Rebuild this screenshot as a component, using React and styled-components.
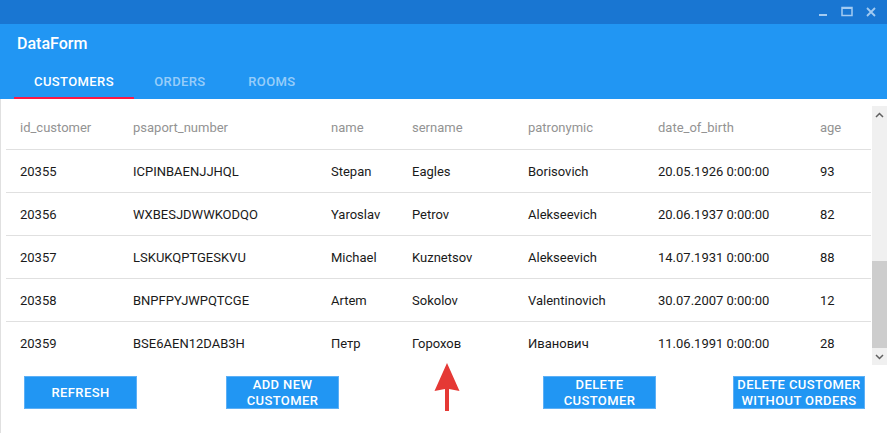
import React from "react";
import styled, { createGlobalStyle } from "styled-components";

const GlobalStyle = createGlobalStyle`
  html, body {
    margin: 0;
    padding: 0;
    background: #ffffff;
  }
  body {
    font-family: Roboto, "Liberation Sans", sans-serif;
  }
`;

const Window = styled.div`
  width: 887px;
  height: 433px;
  display: flex;
  flex-direction: column;
  overflow: hidden;
  background: #fff;
`;

const TitleBar = styled.div`
  height: 24px;
  background: #1976d2;
  display: flex;
  justify-content: flex-end;
  align-items: center;
  padding-right: 10px;
  gap: 12px;
`;

const WinIcon = styled.svg`
  width: 12px;
  height: 12px;
  display: block;
`;

const Header = styled.div`
  background: #2196f3;
  display: flex;
  flex-direction: column;
`;

const AppTitle = styled.div`
  height: 38px;
  padding-left: 17px;
  display: flex;
  align-items: center;
  color: #fff;
  font-size: 16px;
  font-weight: 500;
`;

const Tabs = styled.div`
  height: 37px;
  padding-left: 14px;
  display: flex;
`;

const Tab = styled.div`
  min-width: 92px;
  padding: 3px 20px 0;
  box-sizing: border-box;
  display: flex;
  align-items: center;
  justify-content: center;
  font-size: 13px;
  font-weight: 500;
  letter-spacing: 0.4px;
  color: ${(p) => (p.$active ? "#ffffff" : "rgba(255,255,255,0.55)")};
  border-bottom: 2px solid ${(p) => (p.$active ? "#ff1744" : "transparent")};
`;

const Content = styled.div`
  flex: 1;
  position: relative;
  border-left: 1px solid #e0e0e0;
  display: flex;
  flex-direction: column;
`;

const GridArea = styled.div`
  margin-top: 7px;
  height: 259px;
  display: flex;
  overflow: hidden;
`;

const Table = styled.div`
  width: 865px;
  margin-left: 5px;
  margin-right: 1px;
`;

const cols = "113px 198px 81px 116px 130px 162px 65px";

const HeadRow = styled.div`
  display: grid;
  grid-template-columns: ${cols};
  height: 43px;
  align-items: center;
  color: #939393;
  font-size: 13px;
`;

const Row = styled.div`
  display: grid;
  grid-template-columns: ${cols};
  height: 43px;
  box-sizing: border-box;
  border-top: 1px solid #e0e0e0;
  align-items: center;
  color: #1a1a1a;
  font-size: 13px;
  font-weight: 400;
`;

const Cell = styled.div`
  padding-left: 14px;
  white-space: nowrap;
`;

const ScrollBar = styled.div`
  width: 15px;
  background: #f0f0f0;
  display: flex;
  flex-direction: column;
`;

const ScrollBtn = styled.div`
  height: 17px;
  display: flex;
  align-items: center;
  justify-content: center;
`;

const Track = styled.div`
  flex: 1;
  display: flex;
  flex-direction: column;
  justify-content: flex-end;
`;

const Thumb = styled.div`
  height: 87px;
  background: #cdcdcd;
`;

const ButtonBar = styled.div`
  margin-top: 11px;
  padding-left: 23px;
  display: flex;
`;

const ActionButton = styled.button`
  width: ${(p) => p.$w || 113}px;
  height: 33px;
  margin-left: ${(p) => p.$gap || 0}px;
  background: #2196f3;
  border: 1px solid #5db0f6;
  color: #fff;
  font-family: Roboto, "Liberation Sans", sans-serif;
  font-size: 13px;
  font-weight: 500;
  letter-spacing: 0.4px;
  line-height: 16px;
  padding: 0;
  text-transform: uppercase;
`;

const Arrow = styled.svg`
  position: absolute;
  left: 433px;
  top: 264px;
  width: 26px;
  height: 48px;
`;

const columns = [
  "id_customer",
  "psaport_number",
  "name",
  "sername",
  "patronymic",
  "date_of_birth",
  "age",
];

const rows = [
  ["20355", "ICPINBAENJJHQL", "Stepan", "Eagles", "Borisovich", "20.05.1926 0:00:00", "93"],
  ["20356", "WXBESJDWWKODQO", "Yaroslav", "Petrov", "Alekseevich", "20.06.1937 0:00:00", "82"],
  ["20357", "LSKUKQPTGESKVU", "Michael", "Kuznetsov", "Alekseevich", "14.07.1931 0:00:00", "88"],
  ["20358", "BNPFPYJWPQTCGE", "Artem", "Sokolov", "Valentinovich", "30.07.2007 0:00:00", "12"],
  ["20359", "BSE6AEN12DAB3H", "Петр", "Горохов", "Иванович", "11.06.1991 0:00:00", "28"],
];

export default function App() {
  return (
    <Window>
      <GlobalStyle />
      <TitleBar>
        <WinIcon viewBox="0 0 12 12">
          <rect x="2" y="8" width="8" height="2" fill="#a3cbf2" />
        </WinIcon>
        <WinIcon viewBox="0 0 12 12">
          <rect x="1" y="1.5" width="10" height="8" fill="none" stroke="#a3cbf2" strokeWidth="1.5" />
          <rect x="1" y="1" width="10" height="2" fill="#a3cbf2" />
        </WinIcon>
        <WinIcon viewBox="0 0 12 12">
          <path d="M2 2 L10 10 M10 2 L2 10" stroke="#a3cbf2" strokeWidth="1.8" />
        </WinIcon>
      </TitleBar>
      <Header>
        <AppTitle>DataForm</AppTitle>
        <Tabs>
          <Tab $active>CUSTOMERS</Tab>
          <Tab>ORDERS</Tab>
          <Tab>ROOMS</Tab>
        </Tabs>
      </Header>
      <Content>
        <GridArea>
          <Table>
            <HeadRow>
              {columns.map((c) => (
                <Cell key={c}>{c}</Cell>
              ))}
            </HeadRow>
            {rows.map((r) => (
              <Row key={r[0]}>
                {r.map((v, i) => (
                  <Cell key={i}>{v}</Cell>
                ))}
              </Row>
            ))}
          </Table>
          <ScrollBar>
            <ScrollBtn>
              <svg width="9" height="6" viewBox="0 0 9 6">
                <path d="M1 5 L4.5 1.5 L8 5" fill="none" stroke="#606060" strokeWidth="1.5" />
              </svg>
            </ScrollBtn>
            <Track>
              <Thumb />
            </Track>
            <ScrollBtn>
              <svg width="9" height="6" viewBox="0 0 9 6">
                <path d="M1 1 L4.5 4.5 L8 1" fill="none" stroke="#606060" strokeWidth="1.5" />
              </svg>
            </ScrollBtn>
          </ScrollBar>
        </GridArea>
        <ButtonBar>
          <ActionButton>Refresh</ActionButton>
          <ActionButton $gap={89}>
            Add new
            <br />
            customer
          </ActionButton>
          <ActionButton $gap={204}>
            Delete
            <br />
            customer
          </ActionButton>
          <ActionButton $gap={77} $w={132}>
            Delete customer
            <br />
            without orders
          </ActionButton>
        </ButtonBar>
        <Arrow viewBox="0 0 26 48">
          <path d="M13 0 L25.5 28 L15 26 L15 48 L11 48 L11 26 L0.5 28 Z" fill="#e53935" />
        </Arrow>
      </Content>
    </Window>
  );
}
